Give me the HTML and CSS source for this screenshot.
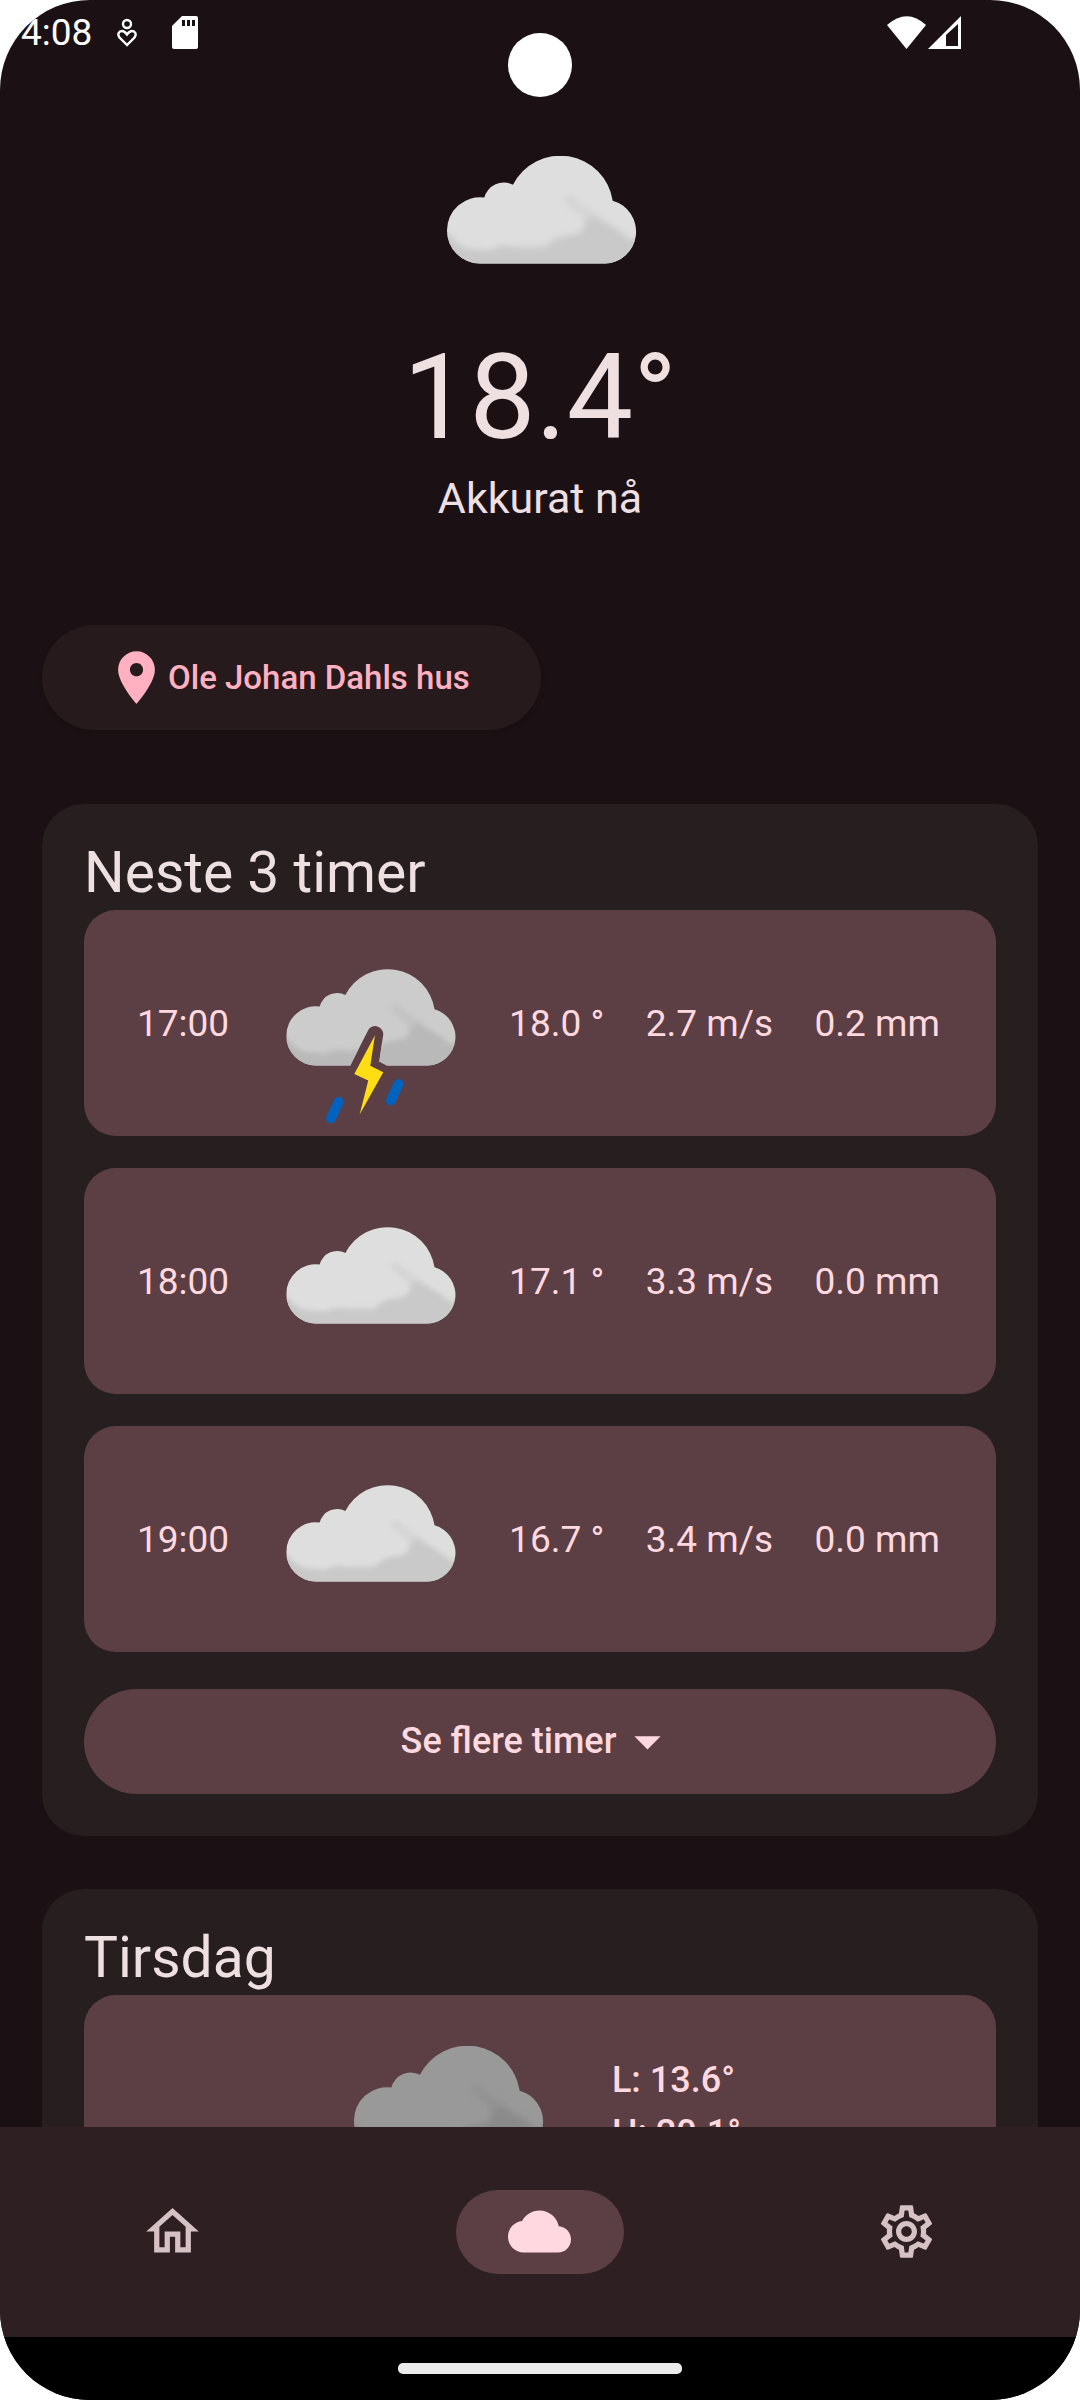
FILE: index.html
```html
<!DOCTYPE html>
<html lang="no">
<head>
<meta charset="utf-8">
<meta name="viewport" content="width=device-width, initial-scale=1">
<title>Vær</title>
<link rel="stylesheet" href="styles.css">
</head>
<body>
<svg class="defs" aria-hidden="true">
  <defs>
    <filter id="soft" x="-10%" y="-10%" width="120%" height="120%"><feGaussianBlur stdDeviation="3"/></filter>
    <clipPath id="cloud-clip"><path d="M33 107.5A33 33 0 0 1 0 74.5A33 33 0 0 1 37.3 41.6A20 20 0 0 1 66 28.8A53 53 0 0 1 165.7 44.7A32 32 0 0 1 158 107.5Z"/></clipPath>
    <clipPath id="storm-clip"><path d="M33 107.5A33 33 0 0 1 0 74.5A33 33 0 0 1 37.3 41.6A20 20 0 0 1 66 28.8A53 53 0 0 1 165.7 44.7A32 32 0 0 1 158 107.5L112.5 107.5L103.9 102.9L108.3 73.5A9 9 0 0 0 91.2 68.7L71.5 107.5Z"/></clipPath>
    <g id="shade"><path d="M-10 76L2 78Q12 93 28 93L44 94Q55 88 66 91L98 91Q108 80 124 79Q138 78 138 66L146 60Q168 70 184 84L205 76V125H-10Z"/><path opacity=".45" d="M116 42Q122 34 130 45L156 62L140 72L134 60Q120 50 116 42Z"/></g>
  </defs>
</svg>
<div class="screen">
  <header class="status">
    <div class="status-group">
      <time class="clock">4:08</time>
      <svg class="glyph wellbeing" viewBox="0 0 20 30" fill="none" stroke="#fff" stroke-width="2.400"><circle cx="10" cy="6" r="4"/><path d="M10 27L2.500 19.500C0 16 2 13 5 13C7.500 13 8.500 14.500 10 16.500C11.500 14.500 12.500 13 15 13C18 13 20 16 17.500 19.500Z"/></svg>
      <svg class="glyph card-glyph" viewBox="0 0 26 34"><path fill="#fff" d="M10 0H24Q26 0 26 2V31Q26 33 24 33H2Q0 33 0 31V10Z"/><path fill="#1b1114" d="M10 4h3v6h-3zM15 4h3v6h-3zM20 4h3v6h-3z"/></svg>
    </div>
    <div class="status-group signals">
      <svg class="glyph wifi" viewBox="0 0 40 34"><path fill="#fff" d="M0 9Q20-8.500 39 9L19.500 33Z"/></svg>
      <svg class="glyph signal" viewBox="0 0 34 34"><path fill="#fff" fill-rule="evenodd" d="M0 33L33 0V33ZM18 30H30V8L18 19Z"/></svg>
    </div>
  </header>
  <div class="camera"></div>

  <main class="content">
    <section class="now">
      <svg class="weather large" viewBox="-21 -48 228 228" role="img" aria-label="Skyet"><g clip-path="url(#cloud-clip)"><path fill="#dedede" d="M0 0H190V108H0Z"/><use href="#shade" fill="#c9c9c9" filter="url(#soft)"/></g></svg>
      <h1 class="temperature">18.4°</h1>
      <p class="caption">Akkurat nå</p>
    </section>

    <button class="place" type="button">
      <svg class="icon" viewBox="0 0 24 24"><path fill="currentColor" d="M12 2C8.130 2 5 5.130 5 9c0 5.250 7 13 7 13s7-7.750 7-13c0-3.870-3.130-7-7-7zm0 9.500c-1.380 0-2.500-1.120-2.500-2.500s1.120-2.500 2.500-2.500 2.500 1.120 2.500 2.500-1.120 2.500-2.500 2.500z"/></svg>
      <span>Ole Johan Dahls hus</span>
    </button>

    <section class="panel">
      <h2 class="panel-title">Neste 3 timer</h2>
      <ul class="hours">
        <li class="row hour">
          <time>17:00</time>
          <svg class="weather" viewBox="-17 -54 220 228" role="img" aria-label="Torden og regn"><g clip-path="url(#storm-clip)"><path fill="#ccc" d="M0 0H190V108H0Z"/><use href="#shade" fill="#b9b9b9" filter="url(#soft)"/></g><path fill="#ffdd15" d="M99.100 73.800L93.900 107.700L108.400 115.100L82 162.400L91.600 124.400L76 117Z"/><path stroke="#0062bf" stroke-width="11" stroke-linecap="round" d="M58.500 148.200L50 166.600M125.500 128.200L117 146.600"/></svg>
          <span>18.0 °</span><span>2.7 m/s</span><span>0.2 mm</span>
        </li>
        <li class="row hour">
          <time>18:00</time>
          <svg class="weather" viewBox="-17 -54 220 228" role="img" aria-label="Skyet"><g clip-path="url(#cloud-clip)"><path fill="#dedede" d="M0 0H190V108H0Z"/><use href="#shade" fill="#c9c9c9" filter="url(#soft)"/></g></svg>
          <span>17.1 °</span><span>3.3 m/s</span><span>0.0 mm</span>
        </li>
        <li class="row hour">
          <time>19:00</time>
          <svg class="weather" viewBox="-17 -54 220 228" role="img" aria-label="Skyet"><g clip-path="url(#cloud-clip)"><path fill="#dedede" d="M0 0H190V108H0Z"/><use href="#shade" fill="#c9c9c9" filter="url(#soft)"/></g></svg>
          <span>16.7 °</span><span>3.4 m/s</span><span>0.0 mm</span>
        </li>
      </ul>
      <button class="more" type="button">
        <span>Se flere timer</span>
        <svg class="icon" viewBox="0 0 24 24"><path fill="currentColor" d="M7 10l5 5 5-5z"/></svg>
      </button>
    </section>

    <section class="panel">
      <h2 class="panel-title">Tirsdag</h2>
      <div class="row day">
        <svg class="weather large" viewBox="-21 -48 228 228" role="img" aria-label="Overskyet"><g clip-path="url(#cloud-clip)"><path fill="#999" d="M0 0H190V108H0Z"/><use href="#shade" fill="#8a8a8a" filter="url(#soft)"/></g></svg>
        <div class="range"><p>L: 13.6°</p><p>H: 20.1°</p></div>
      </div>
    </section>
  </main>

  <nav class="tabs">
    <a class="tab" href="#hjem" aria-label="Hjem"><svg class="icon" viewBox="0 0 24 24"><path fill="currentColor" d="M12 5.690l5 4.500V18h-2v-6H9v6H7v-7.810l5-4.500M12 3L2 12h3v8h6v-6h2v6h6v-8h3L12 3z"/></svg></a>
    <a class="tab active" href="#var" aria-label="Vær" aria-current="page"><svg class="icon" viewBox="0 0 24 24"><path fill="currentColor" d="M19.350 10.040C18.670 6.590 15.640 4 12 4 9.110 4 6.600 5.640 5.350 8.040 2.340 8.360 0 10.910 0 14c0 3.310 2.690 6 6 6h13c2.760 0 5-2.240 5-5 0-2.640-2.050-4.780-4.650-4.960z"/></svg></a>
    <a class="tab" href="#innstillinger" aria-label="Innstillinger"><svg class="icon" viewBox="0 0 24 24"><path fill="currentColor" d="M19.430 12.980c.04-.32.07-.64.07-.98 0-.34-.03-.66-.07-.98l2.110-1.650c.19-.15.24-.42.12-.64l-2-3.460c-.09-.16-.26-.25-.44-.25-.06 0-.12.01-.17.03l-2.490 1c-.52-.4-1.080-.73-1.690-.98l-.38-2.650C14.460 2.180 14.250 2 14 2h-4c-.25 0-.46.18-.49.42l-.38 2.650c-.61.25-1.170.59-1.690.98l-2.490-1c-.06-.02-.12-.03-.18-.03-.17 0-.34.09-.43.25l-2 3.460c-.13.22-.07.49.12.64l2.110 1.650c-.04.32-.07.65-.07.98 0 .33.03.66.07.98l-2.110 1.650c-.19.15-.24.42-.12.64l2 3.460c.09.16.26.25.44.25.06 0 .12-.01.17-.03l2.490-1c.52.4 1.080.73 1.690.98l.38 2.650c.03.24.24.42.49.42h4c.25 0 .46-.18.49-.42l.38-2.650c.61-.25 1.170-.59 1.690-.98l2.490 1c.06.02.12.03.18.03.17 0 .34-.09.43-.25l2-3.460c.12-.22.07-.49-.12-.64l-2.110-1.650zm-1.980-1.710c.04.31.05.52.05.73 0 .21-.02.43-.05.73l-.14 1.130.89.7 1.080.84-.7 1.210-1.270-.51-1.040-.42-.9.680c-.43.32-.84.56-1.250.73l-1.060.43-.16 1.130-.2 1.350h-1.400l-.19-1.350-.16-1.130-1.060-.43c-.43-.18-.83-.41-1.230-.71l-.91-.7-1.060.43-1.270.51-.7-1.210 1.080-.84.89-.7-.14-1.130c-.03-.31-.05-.54-.05-.74s.02-.43.05-.73l.14-1.130-.89-.7-1.080-.84.7-1.210 1.270.51 1.040.42.9-.68c.43-.32.84-.56 1.250-.73l1.060-.43.16-1.130.2-1.350h1.390l.19 1.350.16 1.130 1.060.43c.43.18.83.41 1.230.71l.91.7 1.060-.43 1.270-.51.7 1.210-1.070.85-.89.7.14 1.130zM12 8c-2.210 0-4 1.790-4 4s1.790 4 4 4 4-1.790 4-4-1.790-4-4-4zm0 6c-1.100 0-2-.9-2-2s.9-2 2-2 2 .9 2 2-.9 2-2 2z"/></svg></a>
  </nav>
  <footer class="gesture"><span class="handle"></span></footer>
</div>
</body>
</html>
```
FILE: styles.css
```css
* { box-sizing: border-box; }

body {
  margin: 0;
  background: #fff;
  font-family: Roboto, "Liberation Sans", sans-serif;
  font-size: 37px;
  line-height: 53px;
}

h1, h2, p, ul { margin: 0; padding: 0; font-weight: 400; }
ul { list-style: none; }
svg { display: block; flex: none; }
button { border: 0; font: inherit; font-weight: 500; cursor: pointer; }

.defs { position: absolute; width: 0; height: 0; }

.screen {
  position: relative;
  display: flex;
  flex-direction: column;
  height: 100vh;
  overflow: hidden;
  border-radius: 90px;
  background: #1b1114;
}

/* Status bar */
.status {
  display: flex;
  justify-content: space-between;
  height: 64px;
  padding: 6px 118px 0 21px;
  color: #fff;
}
.status-group { display: flex; align-items: center; height: 53px; }
.clock { margin-right: 25px; }
.wellbeing { width: 20px; height: 30px; margin-right: 35px; }
.card-glyph { width: 26px; height: 34px; }
.signals { gap: 1px; }
.wifi { width: 40px; height: 34px; }
.signal { width: 34px; height: 34px; }
.camera {
  position: absolute;
  top: 33px;
  left: 50%;
  width: 64px;
  height: 64px;
  margin-left: -32px;
  border-radius: 50%;
  background: #fff;
}

/* Scrolling content */
.content {
  flex: 1;
  min-height: 0;
  overflow: hidden;
  padding: 44px 42px 0;
}
.icon { width: 63px; height: 63px; }
.weather { width: 197px; height: 204px; }
.weather.large { width: 228px; height: 228px; }

.now {
  display: flex;
  flex-direction: column;
  align-items: center;
  margin-bottom: 95px;
  color: #eedfe1;
}
.temperature { margin-top: -6px; font-size: 118px; line-height: 137px; }
.caption { font-size: 43px; line-height: 63px; }

.place {
  display: flex;
  align-items: center;
  min-width: 499px;
  height: 105px;
  margin-bottom: 74px;
  padding: 0 63px;
  border-radius: 53px;
  background: #261a1c;
  box-shadow: 0 2px 4px rgba(0, 0, 0, .15);
  color: #ffb1c1;
  font-size: 33px;
}

.panel {
  margin-bottom: 53px;
  padding: 32px 42px 42px;
  border-radius: 42px;
  background: #271e1f;
}
.panel-title { color: #eedfe1; font-size: 57px; line-height: 74px; }

.hours { display: grid; gap: 32px; margin-bottom: 37px; }
.row {
  display: flex;
  border-radius: 32px;
  background: #5c3f44;
  color: #ffd9df;
}
.hour {
  align-items: center;
  justify-content: space-between;
  height: 226px;
  padding: 0 56px 0 53px;
  white-space: nowrap;
}
.day {
  justify-content: center;
  gap: 51px;
  padding: 3px 6px 3px 0;
  font-size: 36px;
}
.range { padding-top: 56px; }
.range p { font-weight: 500; }

.more {
  display: flex;
  align-items: center;
  justify-content: center;
  width: 100%;
  height: 105px;
  border-radius: 53px;
  background: #5c3f44;
  color: #ffd9df;
  font-size: 36px;
}

/* Bottom navigation */
.tabs {
  display: grid;
  grid-template-columns: repeat(3, 1fr);
  gap: 21px;
  align-items: center;
  justify-items: center;
  height: 210px;
  background: #2d1f22;
}
.tab {
  display: flex;
  align-items: center;
  justify-content: center;
  width: 168px;
  height: 84px;
  padding: 0 1px 1px 0;
  border-radius: 42px;
  color: #d6c2c5;
}
.active { background: #5c3f44; color: #ffd9df; }

.gesture {
  display: flex;
  align-items: center;
  justify-content: center;
  height: 63px;
  background: #000;
}
.handle { width: 284px; height: 11px; border-radius: 5px; background: #ebebeb; }
```
